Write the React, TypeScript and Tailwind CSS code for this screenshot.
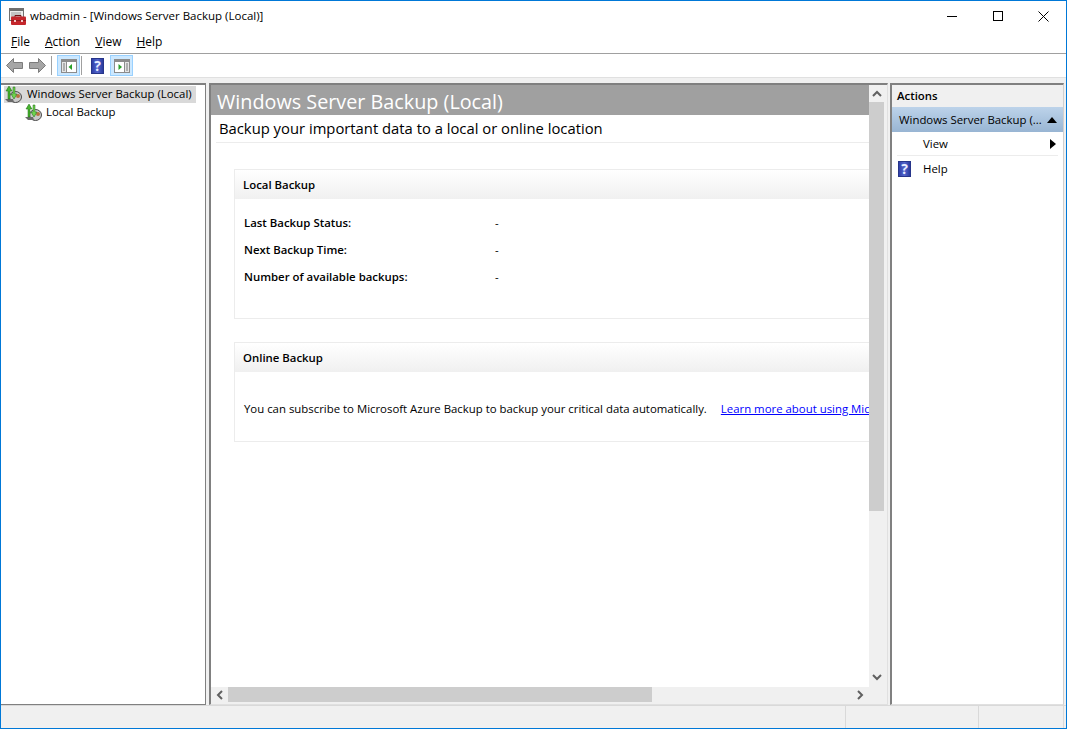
import React from 'react';

const uiFont = { fontFamily: '"Open Sans", "Noto Sans", sans-serif' };

function AppIcon() {
  return (
    <svg width="17" height="17" viewBox="0 0 17 17" className="shrink-0">
      <rect x="0.5" y="0.5" width="14" height="12" fill="#ececec" stroke="#707070" />
      <rect x="1" y="1" width="13" height="2" fill="#6e6e6e" />
      <path d="M2 5h10M2 7h10M2 9h10" stroke="#9a9a9a" />
      <path d="M6 9V7.5h6V9" fill="none" stroke="#6f1417" />
      <rect x="2" y="8.5" width="15" height="8.5" rx="1" fill="#c4262c" />
      <path d="M2 12.5h15" stroke="#8f1b1f" />
      <rect x="5" y="12" width="2" height="2" fill="#f0c8c8" />
      <rect x="12" y="12" width="2" height="2" fill="#f0c8c8" />
    </svg>
  );
}

function BackupIcon() {
  return (
    <svg width="17" height="17" viewBox="0 0 17 17" className="shrink-0">
      <ellipse cx="10.5" cy="11" rx="6" ry="5.5" fill="#c9c9c9" stroke="#4a4a4a" />
      <circle cx="13" cy="10" r="2" fill="#b9703f" />
      <path d="M0 13l3 3h6l-1-3z" fill="#6a6a6a" />
      <path d="M3 13V5H1l3-5 3 5H5v8z" fill="#48b52f" stroke="#1d6b12" strokeWidth="0.5" />
      <path d="M8 1v7H6l3 5 3-5h-2V1z" fill="#6fd24f" stroke="#1d6b12" strokeWidth="0.5" />
    </svg>
  );
}

function HelpIcon() {
  return (
    <div className="flex h-[16px] w-[13px] shrink-0 items-center justify-center border border-[#27358a] bg-gradient-to-r from-[#2f3fa8] via-[#5566cc] to-[#2a3a9e] text-[14px] font-bold leading-none text-[#e8ecff]">
      ?
    </div>
  );
}

function NavArrow({ flip }: { flip?: boolean }) {
  return (
    <svg width="17" height="15" viewBox="0 0 17 15" className={flip ? 'scale-x-[-1]' : ''}>
      <path d="M0.5 7.5l7-7v4h9v6h-9v4z" fill="#a6a6a6" stroke="#7c7c7c" />
    </svg>
  );
}

function PaneButton({ side }: { side: 'left' | 'right' }) {
  return (
    <div className="flex h-[21px] w-[23px] items-center justify-center border border-[#99d1ff] bg-[#cce8ff]">
      <svg width="16" height="14" viewBox="0 0 16 14">
        <rect x="0.5" y="0.5" width="15" height="13" fill="#fff" stroke="#8c8c8c" />
        <rect x="1" y="1" width="14" height="2" fill="#8c8c8c" />
        {side === 'left' ? (
          <>
            <path d="M1 3h4v10H1z" fill="#e4e4e4" />
            <path d="M2 5h2M2 7h2M2 9h2M2 11h2" stroke="#7a7a7a" />
            <path d="M5.5 3v10" stroke="#8c8c8c" />
            <path d="M11 5v6L7.5 8z" fill="#2aa12a" />
          </>
        ) : (
          <>
            <path d="M11 3h4v10h-4z" fill="#e4e4e4" />
            <path d="M12 5h2M12 7h2M12 9h2M12 11h2" stroke="#7a7a7a" />
            <path d="M10.5 3v10" stroke="#8c8c8c" />
            <path d="M4.5 5v6L8 8z" fill="#2aa12a" />
          </>
        )}
      </svg>
    </div>
  );
}

function Chevron({ dir }: { dir: 'up' | 'down' | 'left' | 'right' }) {
  const paths = {
    up: 'M1 6l4-4 4 4',
    down: 'M1 2l4 4 4-4',
    left: 'M6 1L2 5l4 4',
    right: 'M2 1l4 4-4 4',
  };
  const size = dir === 'up' || dir === 'down' ? { w: 10, h: 8 } : { w: 8, h: 10 };
  return (
    <svg width={size.w} height={size.h} viewBox={`0 0 ${size.w} ${size.h}`}>
      <path d={paths[dir]} fill="none" stroke="#606060" strokeWidth="2" />
    </svg>
  );
}

function SectionHeader({ title }: { title: string }) {
  return (
    <div className="flex h-[29px] items-center bg-gradient-to-b from-white to-[#f0f0f0] pl-2 text-[11.4px] font-semibold text-black">
      {title}
    </div>
  );
}

function StatusRow({ label }: { label: string }) {
  return (
    <div className="flex h-[27px] items-center text-[11.4px] text-black">
      <span className="w-[251px] font-semibold">{label}</span>
      <span>-</span>
    </div>
  );
}

export default function App() {
  return (
    <div
      style={uiFont}
      className="flex h-[729px] w-[1067px] flex-col overflow-hidden border border-[#0078d7] bg-white text-black"
    >
      {/* title bar */}
      <div className="flex h-[30px] shrink-0 items-center">
        <div className="ml-[8px] mr-[4px]">
          <AppIcon />
        </div>
        <span className="text-[11.5px]">wbadmin - [Windows Server Backup (Local)]</span>
        <div className="ml-auto flex h-full items-center text-black">
          <div className="flex h-full w-[46px] items-center justify-center">
            <div className="h-px w-[10px] bg-black" />
          </div>
          <div className="flex h-full w-[45px] items-center justify-center">
            <div className="h-[10px] w-[10px] border border-black" />
          </div>
          <div className="flex h-full w-[46px] items-center justify-center">
            <svg width="11" height="11" viewBox="0 0 11 11">
              <path d="M0.5 0.5l10 10M10.5 0.5l-10 10" stroke="#000" strokeWidth="1" />
            </svg>
          </div>
        </div>
      </div>

      {/* menu */}
      <div className="flex h-[23px] shrink-0 items-center gap-[15px] border-b border-[#a0a0a0] pl-[10px] text-[12px]">
        <span><u>F</u>ile</span>
        <span><u>A</u>ction</span>
        <span><u>V</u>iew</span>
        <span><u>H</u>elp</span>
      </div>

      {/* toolbar */}
      <div className="flex h-[23px] shrink-0 items-center pl-[5px]">
        <NavArrow />
        <div className="ml-[6px]">
          <NavArrow flip />
        </div>
        <div className="ml-[5px] h-[19px] w-px bg-[#a0a0a0]" />
        <div className="ml-[5px]">
          <PaneButton side="left" />
        </div>
        <div className="ml-[1px] h-[19px] w-px bg-[#a0a0a0]" />
        <div className="ml-[9px]">
          <HelpIcon />
        </div>
        <div className="ml-[6px]">
          <PaneButton side="right" />
        </div>
      </div>

      {/* panes */}
      <div className="flex min-h-0 flex-1 border-t border-[#e0e0e0] bg-[#f0f0f0] pt-[5px]">
        {/* tree */}
        <div className="h-full w-[205px] shrink-0 border-b border-r border-t-2 border-[#808080] bg-white pl-[3px] pt-px">
          <div className="flex h-[17px] w-[192px] items-center gap-[5px] bg-[#d9d9d9] pl-[1px] text-[11.4px]">
            <BackupIcon />
            <span className="whitespace-nowrap pb-px">Windows Server Backup (Local)</span>
          </div>
          <div className="flex h-[18px] items-center gap-[4px] pl-[21px] text-[11.4px]">
            <BackupIcon />
            <span>Local Backup</span>
          </div>
        </div>

        {/* center */}
        <div className="ml-[3px] flex h-full w-[679px] shrink-0 flex-col border-b border-l-2 border-r border-t-2 border-[#808080] border-b-[#e0e0e0] border-r-[#e0e0e0] bg-[#f0f0f0]">
          <div className="flex min-h-0 flex-1">
            <div className="flex w-[658px] shrink-0 flex-col overflow-hidden bg-white">
              <div className="flex h-[30px] shrink-0 items-center bg-[#a0a0a0] pl-[6px] pt-[3px] text-[19.8px] text-white">
                Windows Server Backup (Local)
              </div>
              <div className="ml-[5px] flex h-[28px] shrink-0 items-center border-b border-[#ececec] pl-[3px] text-[14.8px]">
                Backup your important data to a local or online location
              </div>
              <div className="flex flex-col gap-[23px] pl-[23px] pt-[26px]">
                <div className="h-[150px] w-[700px] border border-[#ececec]">
                  <SectionHeader title="Local Backup" />
                  <div className="pl-[9px] pt-[10px]">
                    <StatusRow label="Last Backup Status:" />
                    <StatusRow label="Next Backup Time:" />
                    <StatusRow label="Number of available backups:" />
                  </div>
                </div>
                <div className="h-[100px] w-[700px] border border-[#ececec]">
                  <SectionHeader title="Online Backup" />
                  <div className="flex whitespace-nowrap pl-[9px] pt-[28px] text-[11.4px]">
                    <span>You can subscribe to Microsoft Azure Backup to backup your critical data automatically.</span>
                    <span className="ml-[14px] text-[#0000ff] underline">Learn more about using Microsoft Azure</span>
                  </div>
                </div>
              </div>
            </div>
            {/* vertical scrollbar */}
            <div className="flex w-[17px] shrink-0 flex-col bg-[#f0f0f0]">
              <div className="flex h-[17px] w-[15px] shrink-0 items-center justify-center">
                <Chevron dir="up" />
              </div>
              <div className="w-[15px] flex-1">
                <div className="h-[409px] w-full bg-[#cdcdcd]" />
              </div>
              <div className="mb-[2px] flex h-[17px] w-[15px] shrink-0 items-center justify-center">
                <Chevron dir="down" />
              </div>
            </div>
          </div>
          {/* horizontal scrollbar */}
          <div className="flex h-[17px] shrink-0">
            <div className="flex h-[15px] w-[17px] shrink-0 items-center justify-center">
              <Chevron dir="left" />
            </div>
            <div className="h-[15px] w-[424px] bg-[#cdcdcd]" />
            <div className="ml-auto mr-[19px] flex h-[15px] w-[17px] items-center justify-center">
              <Chevron dir="right" />
            </div>
          </div>
        </div>

        {/* actions */}
        <div className="ml-[2px] h-full w-[174px] shrink-0 border-b border-l-2 border-r border-t-2 border-[#808080] border-b-[#e0e0e0] border-r-[#d0d0d0] bg-white">
          <div className="flex h-[22px] items-center bg-[#f0f0f0] pl-[5px] text-[11.4px] font-semibold">Actions</div>
          <div className="flex h-[25px] items-center justify-between bg-gradient-to-b from-[#bdd3ea] to-[#98b5d3] pl-[7px] pr-[6px] text-[11.4px]">
            <span className="whitespace-nowrap">Windows Server Backup (...</span>
            <svg width="10" height="6" viewBox="0 0 10 6">
              <path d="M0 6l5-6 5 6z" fill="#000" />
            </svg>
          </div>
          <div className="mx-[5px] flex h-[24px] items-center justify-between border-b border-[#ececec] pl-[26px] text-[11.4px]">
            <span>View</span>
            <svg width="6" height="10" viewBox="0 0 6 10" className="mr-[2px]">
              <path d="M0 0l6 5-6 5z" fill="#000" />
            </svg>
          </div>
          <div className="flex h-[25px] items-center gap-[12px] pl-[6px] text-[11.4px]">
            <HelpIcon />
            <span>Help</span>
          </div>
        </div>
      </div>

      {/* status bar */}
      <div className="flex h-[23px] shrink-0 border-t border-[#d9d9d9] bg-[#f0f0f0]">
        <div className="w-[845px] border-r border-[#d9d9d9]" />
        <div className="w-[133px] border-r border-[#d9d9d9]" />
        <div className="w-[85px] border-r border-[#d9d9d9]" />
      </div>
    </div>
  );
}
